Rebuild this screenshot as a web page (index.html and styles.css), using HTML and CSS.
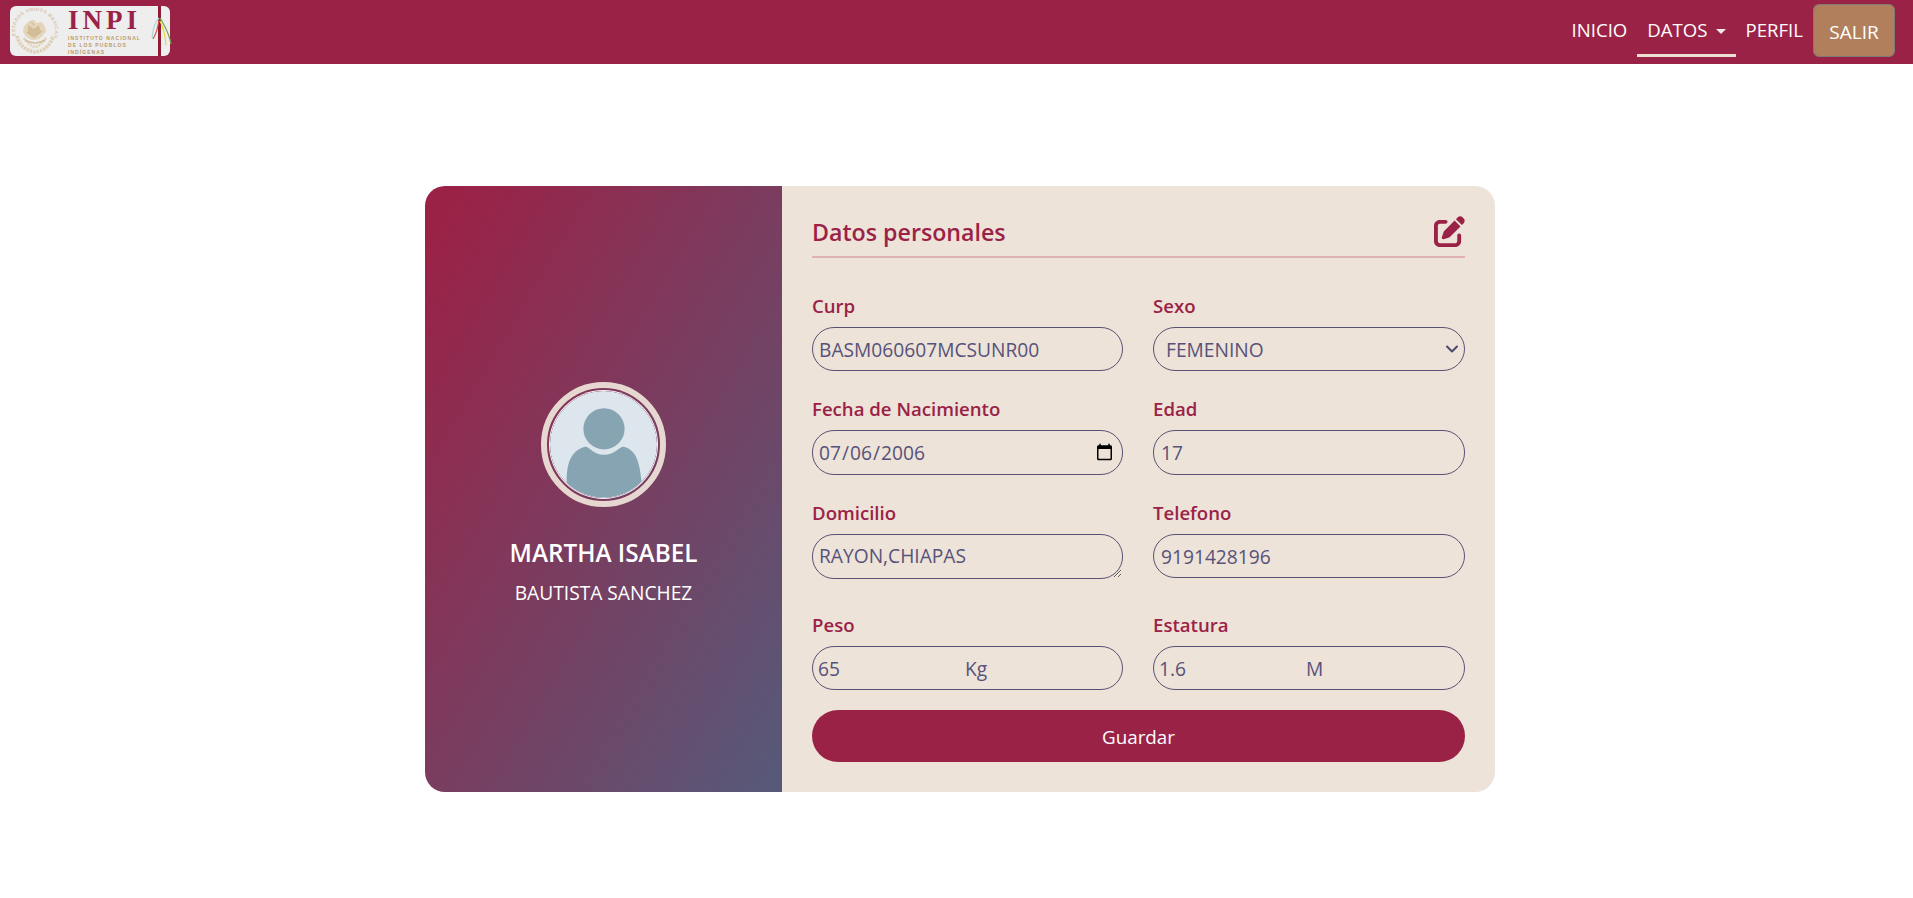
FILE: index.html
```html
<!DOCTYPE html>
<html lang="es">
<head>
<meta charset="utf-8">
<title>Datos personales</title>
<link rel="stylesheet" href="styles.css">
</head>
<body>
<nav class="navbar">
  <a class="brand" href="#">
    <svg class="seal" viewBox="0 0 50 50" aria-hidden="true">
      <defs><path id="seal-arc" d="M6 31A20 20 0 1 1 44 31"/></defs>
      <text class="seal-text"><textPath href="#seal-arc" startOffset="2%">ESTADOS UNIDOS MEXICANOS</textPath></text>
      <path d="M7 30c2 9 9 15 18 16 9-1 16-7 18-16" fill="none" stroke="#dfcfb3" stroke-width="3.6" stroke-dasharray="2.4 1"/>
      <path d="M14 32c3 5 7 8 11 9 4-1 8-4 11-9" fill="none" stroke="#e2d3b8" stroke-width="2.6" stroke-dasharray="2 1"/>
      <path d="M13 24c2-7 7-10 11-10l2 3 5-1c3 2 5 6 5 10-3 2-4 5-7 7-5 2-9 1-12-2-2-2-4-4-4-7z" fill="#e3d4ba"/>
      <path d="M18 19l6 4 5-4 1 8-6 5-6-5z" fill="#d2bd98"/>
      <path d="M21 16l3 3M28 22l4 4M17 26l5 4M26 29l5-3" stroke="#c9b28a" stroke-width="1" fill="none"/>
      <path d="M15 34c6 4 14 4 20 0" fill="none" stroke="#d4c09d" stroke-width="1.6"/>
    </svg>
    <span class="brand-text">
      <span class="brand-name">INPI</span>
      <span class="brand-sub">INSTITUTO NACIONAL<br>DE LOS PUEBLOS<br>INDÍGENAS</span>
    </span>
    <svg class="staff" viewBox="0 0 24 50" aria-hidden="true">
      <rect x="5" y="0" width="3" height="50" fill="#8e1c34"/>
      <path d="M6 12C3 15 0 22-1 32" fill="none" stroke="#a8d8e0" stroke-width="1.2"/>
      <path d="M6 14C5 21 3 28 0 33" fill="none" stroke="#d8503c" stroke-width="1.2"/>
      <path d="M7 15c3 6 5 13 6 24" fill="none" stroke="#f0d040" stroke-width="1.2"/>
      <path d="M7 12c4 7 9 14 11 26" fill="none" stroke="#6aa84f" stroke-width="1.2"/>
    </svg>
  </a>
  <ul class="nav-links">
    <li><a class="nav-link" href="#">INICIO</a></li>
    <li><a class="nav-link active" href="#">DATOS<span class="caret"></span></a></li>
    <li><a class="nav-link" href="#">PERFIL</a></li>
    <li><button class="logout" type="button">SALIR</button></li>
  </ul>
</nav>

<main class="page">
  <section class="card">
    <aside class="profile">
      <div class="avatar">
        <svg viewBox="0 0 109 109" aria-hidden="true">
          <circle cx="54.5" cy="54.5" r="54.5" fill="#dde6ec"/>
          <clipPath id="avatar-clip"><circle cx="54.5" cy="54.5" r="54"/></clipPath>
          <g clip-path="url(#avatar-clip)" fill="#87a4b3">
            <circle cx="55" cy="38.5" r="21"/>
            <path d="M17 112V92C17 74 21 61 35 57 40 55.5 43 65 55 65S71 55.5 76 57C89 61 93 74 94.5 112Z"/>
          </g>
        </svg>
      </div>
      <h2 class="first-name">MARTHA ISABEL</h2>
      <p class="last-name">BAUTISTA SANCHEZ</p>
    </aside>
    <form class="details">
      <header class="details-head">
        <h1 class="details-title">Datos personales</h1>
        <svg class="edit-icon" viewBox="0 0 512 512" aria-hidden="true">
          <path d="M471.6 21.7c-21.9-21.9-57.3-21.9-79.2 0L362.3 51.7l97.9 97.9 30.1-30.1c21.9-21.9 21.9-57.3 0-79.2L471.6 21.7zm-299.2 220c-6.1 6.1-10.8 13.6-13.5 21.9l-29.6 88.8c-2.9 8.6-.6 18.1 5.8 24.6s15.9 8.7 24.6 5.8l88.8-29.6c8.2-2.7 15.7-7.4 21.9-13.5L437.7 172.3 339.7 74.3 172.4 241.7zM96 64C43 64 0 107 0 160V416c0 53 43 96 96 96H352c53 0 96-43 96-96V320c0-17.7-14.3-32-32-32s-32 14.3-32 32v96c0 17.7-14.3 32-32 32H96c-17.7 0-32-14.3-32-32V160c0-17.7 14.3-32 32-32h96c17.7 0 32-14.3 32-32s-14.3-32-32-32H96z"/>
        </svg>
      </header>
      <div class="fields">
        <div class="field">
          <label for="curp">Curp</label>
          <input class="control pad-curp" id="curp" type="text" value="BASM060607MCSUNR00">
        </div>
        <div class="field">
          <label for="sexo">Sexo</label>
          <select class="control pick" id="sexo"><option>FEMENINO</option></select>
        </div>
        <div class="field field-mid">
          <label for="nac">Fecha de Nacimiento</label>
          <input class="control pad-date tall" id="nac" type="date" value="2006-07-06">
        </div>
        <div class="field field-mid">
          <label for="edad">Edad</label>
          <input class="control pad-num tall" id="edad" type="text" value="17">
        </div>
        <div class="field">
          <label for="dom">Domicilio</label>
          <textarea class="control pad-curp area" id="dom" rows="1">RAYON,CHIAPAS</textarea>
        </div>
        <div class="field">
          <label for="tel">Telefono</label>
          <input class="control pad-num" id="tel" type="text" value="9191428196">
        </div>
        <div class="field field-low">
          <label for="peso">Peso</label>
          <div class="control unit-box">
            <input class="bare" id="peso" type="text" value="65"><span class="unit">Kg</span>
          </div>
        </div>
        <div class="field field-low">
          <label for="est">Estatura</label>
          <div class="control unit-box">
            <input class="bare" id="est" type="text" value="1.6"><span class="unit">M</span>
          </div>
        </div>
      </div>
      <button class="save" type="button">Guardar</button>
    </form>
  </section>
</main>
</body>
</html>
```

FILE: styles.css
```css
* { box-sizing: border-box; }
html, body { margin: 0; height: 100%; }
body {
  background: #fff;
  font-family: "Open Sans", "Noto Sans", sans-serif;
  font-size: 16px;
  color: #57527a;
}
.navbar {
  height: 64px;
  background: #9b2247;
  display: flex;
  align-items: flex-start;
  justify-content: space-between;
  padding: 6px 18px 0 10px;
}
.brand {
  width: 160px;
  height: 50px;
  background: #eeeeee;
  border-radius: 6px;
  display: flex;
  align-items: center;
  text-decoration: none;
}
.seal { width: 50px; height: 50px; flex: none; overflow: visible; }
.seal-text {
  font-family: "Liberation Sans", sans-serif;
  font-size: 4.6px;
  font-weight: 700;
  letter-spacing: 0.5px;
  fill: #d6c3a2;
}
.brand-text { display: flex; flex-direction: column; width: 90px; margin-left: 8px; flex: none; }
.brand-name {
  font-family: "Liberation Serif", serif;
  font-weight: 700;
  font-size: 27px;
  line-height: 28px;
  letter-spacing: 4px;
  color: #9b2247;
}
.brand-sub {
  font-family: "Liberation Sans", sans-serif;
  font-size: 5px;
  font-weight: 700;
  line-height: 7.2px;
  letter-spacing: 1.05px;
  color: #bd9a6a;
  margin-top: 1px;
  white-space: nowrap;
}
.staff { width: 24px; height: 50px; flex: none; margin-left: -5px; overflow: visible; }
.nav-links {
  list-style: none;
  display: flex;
  align-items: flex-start;
  margin: -2px 0 0;
  padding: 0;
}
.nav-link {
  display: block;
  padding: 0 10px;
  height: 53px;
  line-height: 52px;
  color: #fff;
  text-decoration: none;
  font-size: 18.6px;
}
.nav-link.active { border-bottom: 3px solid #ecdfd3; }
.caret {
  display: inline-block;
  margin-left: 8px;
  vertical-align: 3px;
  border-top: 5.5px solid #f4ebe6;
  border-left: 5.5px solid transparent;
  border-right: 5.5px solid transparent;
}
.logout {
  display: block;
  width: 82px;
  height: 53px;
  background: #b27f5c;
  border: 1px solid #7d7a78;
  border-radius: 6px;
  color: #fff;
  font: inherit;
  font-size: 19px;
  padding: 3px 0 0;
}
.page {
  display: flex;
  justify-content: center;
  padding-top: 122px;
}
.card {
  width: 1070px;
  height: 606px;
  margin-left: 7px;
  display: flex;
  border-radius: 20px;
  overflow: hidden;
}
.profile {
  width: 357px;
  flex: none;
  background: linear-gradient(to bottom right, #9b2247 5%, #585878 97%);
  display: flex;
  flex-direction: column;
  align-items: center;
  color: #fff;
  padding-top: 196px;
}
.avatar {
  width: 125px;
  height: 125px;
  border-radius: 50%;
  border: 6px solid #e6d8d0;
  padding: 3px;
}
.avatar svg {
  display: block;
  width: 100%;
  height: 100%;
  border-radius: 50%;
  box-shadow: 0 0 0 1px #f4f6f8;
}
.first-name {
  margin: 28px 0 0;
  font-size: 24.3px;
  line-height: 36px;
  font-weight: 600;
  white-space: nowrap;
}
.last-name {
  margin: 8px 0 0;
  font-size: 19.2px;
  line-height: 28px;
  white-space: nowrap;
}
.details {
  flex: 1;
  background: #ede3d8;
  padding: 28px 30px 30px;
  display: flex;
  flex-direction: column;
}
.details-head {
  height: 44px;
  border-bottom: 2px solid #dfb0b4;
  display: flex;
  justify-content: space-between;
  align-items: flex-start;
}
.details-title {
  margin: 0;
  font-size: 23.2px;
  line-height: 36px;
  font-weight: 600;
  color: #9b2247;
}
.edit-icon { width: 31px; height: 31px; fill: #9b2247; margin-top: 2px; }
.fields {
  display: grid;
  grid-template-columns: 311px 312px;
  column-gap: 30px;
  margin-top: 34px;
}
.field { display: flex; flex-direction: column; height: 103px; }
.field-mid { height: 104px; }
.field label {
  font-size: 18.6px;
  line-height: 27px;
  font-weight: 600;
  color: #9b2247;
  margin-bottom: 8px;
}
.field-low { margin-top: 9px; height: 97px; }
.control {
  display: block;
  width: 100%;
  height: 44px;
  margin: 0;
  background: transparent;
  border: 1px solid #5a5275;
  border-radius: 22px;
  font-family: inherit;
  font-size: 19.2px;
  color: #57527a;
  outline: none;
}
.tall { height: 45px; }
.pad-curp { padding: 0 6px; }
.pad-date { padding: 0 6px 0 5px; }
.pad-num { padding: 0 7px; }
.pick {
  appearance: none;
  padding: 0 12px;
  background: url("data:image/svg+xml,%3Csvg xmlns='http://www.w3.org/2000/svg' viewBox='0 0 16 16'%3E%3Cpath fill='none' stroke='%23474a6b' stroke-linecap='round' stroke-linejoin='round' stroke-width='2' d='m3 5.5 5 5 5-5'/%3E%3C/svg%3E") no-repeat right 4px center / 16px 16px;
}
.area {
  height: 45px;
  line-height: 28px;
  padding-top: 7px;
  resize: vertical;
  overflow: hidden;
}
.unit-box { display: flex; align-items: center; padding: 0 5px; }
.bare {
  width: 147px;
  flex: none;
  border: 0;
  padding: 0;
  background: transparent;
  font: inherit;
  color: inherit;
  outline: none;
}
.save {
  width: 100%;
  height: 52px;
  margin-top: 2px;
  background: #9b2247;
  border: 0;
  border-radius: 26px;
  color: #fff;
  font: inherit;
  font-size: 18.8px;
  padding: 1px 0 0;
}
```
